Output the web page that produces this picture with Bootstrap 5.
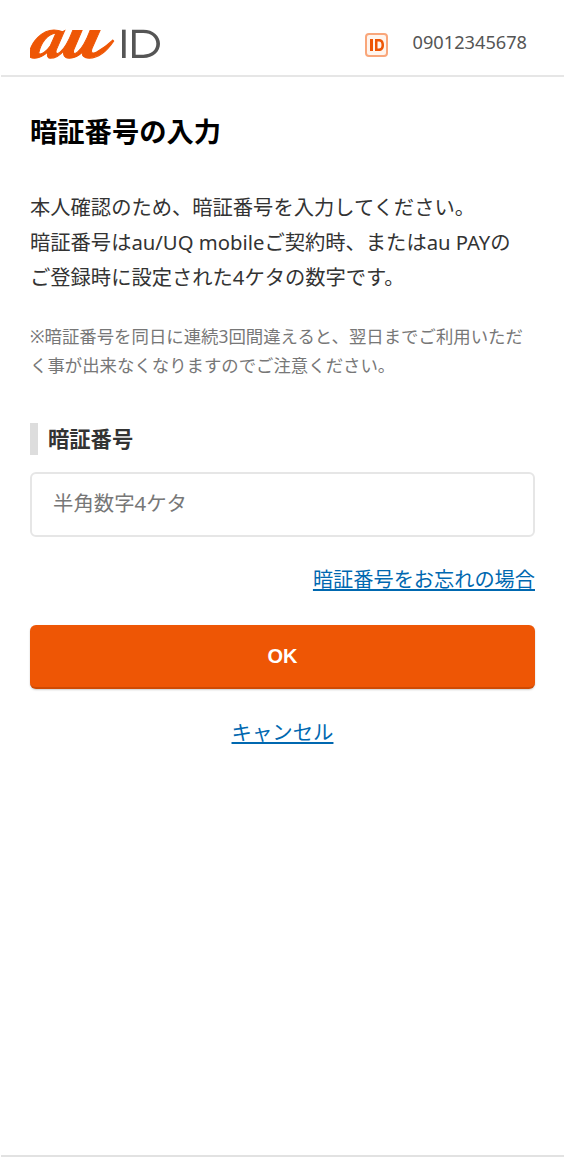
<!DOCTYPE html>
<html lang="ja">
<head>
<meta charset="utf-8">
<meta name="viewport" content="width=device-width, initial-scale=1">
<link href="https://cdn.jsdelivr.net/npm/bootstrap@5.3.0/dist/css/bootstrap.min.css" rel="stylesheet">
<style>
body { font-family: "Noto Sans", "Noto Sans CJK JP", sans-serif; color: #333; background: #fff; }
.page-shell { min-height: 1157px; border-bottom: 2px solid #e2e2e2; margin: 0 8px 0 1px; }
.top-bar { height: 77px; border-bottom: 2px solid #e6e6e6; padding: 8px 37px 0 29px; }
.id-mark { margin-top: 7px; }
.user-num { font-size: 18.200px; color: #555; margin: 3px 0 0 25px; }
.main-area { padding: 0 29px; }
.page-title { font-size: 27.300px; font-weight: 700; color: #000; margin: 37px 0 0; line-height: 36px; }
.lead-text { font-size: 20.300px; line-height: 35px; margin: 40px 0 0; color: #333; }
.note-text { font-size: 17.400px; line-height: 29px; color: #777; margin: 27px 0 0; }
.field-label { font-size: 21.300px; font-weight: 700; border-left: 8px solid #ddd; padding-left: 10px; line-height: 32px; margin: 43px 0 0; color: #333; }
.pin-input { height: 65px; border: 2px solid #e6e6e6; border-radius: 6px; padding: 0 21px 3px; font-size: 20.400px; margin-top: 17px; color: #333; }
.pin-input::placeholder { color: #777; }
.aux-link { font-size: 20.400px; color: #0068b0; }
.forgot-row { margin-top: 27px; line-height: 30px; }
.forgot-row .aux-link { font-size: 20.200px; }
.ok-btn { height: 64px; margin-top: 29px; background: #ee5605; border: 0; border-bottom: 2px solid #cf4a03; border-radius: 6px; color: #fff; font-family: "Liberation Sans", sans-serif; font-size: 20px; font-weight: 700; box-shadow: 0 1px 2px rgba(0,0,0,.2); }
.cancel-row { margin-top: 28px; line-height: 30px; }
</style>
</head>
<body>
<div class="page-shell">
  <header class="top-bar d-flex align-items-center justify-content-between">
    <svg width="130" height="35" viewBox="12 0 390 105" role="img" aria-label="au ID">
      <path transform="translate(0 2) scale(1 1.05)" fill="#ee5605" stroke="#ee5605" stroke-width="3" fill-rule="evenodd" d="M10 84C14 48 50 15 84 15C94 15 102 17 110 20L116 17L91 72C87 84 95 85 103 78C117 66 130 42 140 17L168 17L144 70C139 84 147 85 155 78C170 66 182 42 192 17L222 17L198 68C193 82 202 84 212 78C230 68 248 55 260 44L263 47C248 68 222 95 190 96C174 96 166 88 170 78C158 90 145 96 130 96C115 96 110 86 114 74C102 88 88 96 72 96C65 96 62 88 66 78C52 90 38 96 26 96C14 96 8 92 10 84ZM38 82C45 50 65 27 90 24L72 62C62 76 45 88 38 82Z"/>
      <rect x="288" y="17" width="11" height="85" fill="#555"/>
      <path fill="#555" fill-rule="evenodd" d="M318 17h34c30 0 50 19 50 42.500s-20 42.500-50 42.500h-34zM329 27v65h23c24 0 39-14 39-32.500s-15-32.500-39-32.500z"/>
    </svg>
    <div class="d-flex align-items-center">
      <svg class="id-mark" width="23" height="24" viewBox="0 0 23 24" aria-hidden="true">
        <rect x="1" y="1" width="21" height="22" rx="3" fill="#fff5ee" stroke="#f9a67a" stroke-width="2"/>
        <rect x="5" y="6" width="3" height="12" fill="#ee5605"/>
        <path fill-rule="evenodd" d="M10 6h4c3 0 5 2 5 6s-2 6-5 6h-4zM12.500 8.500v7H14c1.500 0 2.500-1 2.500-3.500S15.500 8.500 14 8.500z" fill="#ee5605"/>
      </svg>
      <span class="user-num">09012345678</span>
    </div>
  </header>
  <main class="main-area">
    <h1 class="page-title">暗証番号の入力</h1>
    <p class="lead-text">本人確認のため、暗証番号を入力してください。<br>暗証番号はau/UQ mobileご契約時、またはau PAYの<br>ご登録時に設定された4ケタの数字です。</p>
    <p class="note-text">※暗証番号を同日に連続3回間違えると、翌日までご利用いただく事が出来なくなりますのでご注意ください。</p>
    <form>
      <div class="field-label">暗証番号</div>
      <input class="form-control pin-input" type="text" placeholder="半角数字4ケタ">
      <div class="forgot-row text-end"><a class="aux-link" href="#">暗証番号をお忘れの場合</a></div>
      <button class="btn ok-btn w-100" type="button">OK</button>
      <div class="cancel-row text-center"><a class="aux-link" href="#">キャンセル</a></div>
    </form>
  </main>
</div>
<script src="https://cdn.jsdelivr.net/npm/bootstrap@5.3.0/dist/js/bootstrap.bundle.min.js"></script>
</body>
</html>
